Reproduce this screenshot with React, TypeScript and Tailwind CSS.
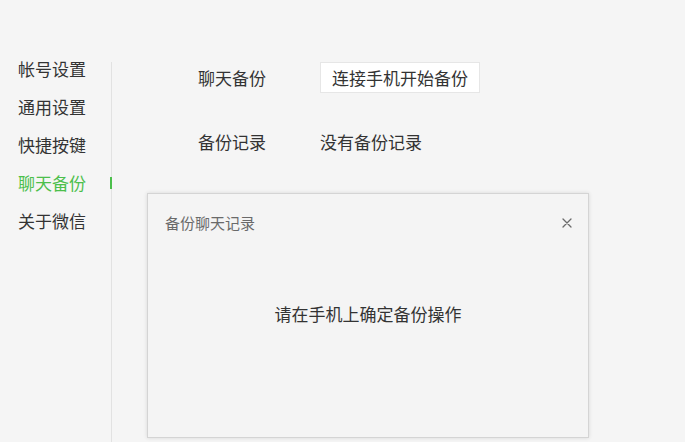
const FONT = '"Microsoft YaHei", "Noto Sans CJK SC", "Noto Sans", sans-serif';

const NAV = ['帐号设置', '通用设置', '快捷按键', '聊天备份', '关于微信'];

function CloseIcon() {
  return (
    <svg width="10" height="10" viewBox="0 0 10 10" aria-hidden="true">
      <path d="M1 1 L9 9 M9 1 L1 9" stroke="#6b6b6b" strokeWidth="1.3" strokeLinecap="round" />
    </svg>
  );
}

export default function App() {
  const active = '聊天备份';
  return (
    <div
      className="relative flex h-[442px] w-[685px] overflow-hidden bg-[#f5f5f5] text-[#333333]"
      style={{ fontFamily: FONT }}
    >
      {/* Sidebar */}
      <nav className="flex w-[111px] shrink-0 flex-col pt-[50px]">
        {NAV.map((item) => (
          <div key={item} className="relative flex h-[38px] items-center pl-[18px] text-[17px]">
            <span className={item === active ? 'text-[#4cbf4c]' : ''}>{item}</span>
            {item === active && (
              <span className="absolute right-[-1px] top-[13px] h-[12px] w-[2px] bg-[#4cbf4c]" />
            )}
          </div>
        ))}
      </nav>
      <div className="mt-[62px] w-px shrink-0 self-stretch bg-[#e2e2e2]" />

      {/* Content */}
      <main className="flex flex-col pl-[86px] pt-[62px] text-[17px]">
        <div className="flex h-[31px] items-center">
          <span className="w-[122px]">聊天备份</span>
          <button
            type="button"
            className="h-[31px] border border-[#e6e6e6] bg-white px-[11px] text-[17px] text-[#333333]"
          >
            连接手机开始备份
          </button>
        </div>
        <div className="mt-[33px] flex h-[31px] items-center">
          <span className="w-[122px]">备份记录</span>
          <span>没有备份记录</span>
        </div>
      </main>

      {/* Dialog */}
      <div className="absolute left-[147px] top-[193px] flex h-[245px] w-[442px] flex-col border border-[#d4d4d4] bg-[#f4f4f4] shadow-[0_0_4px_rgba(0,0,0,0.12)]">
        <div className="flex items-center justify-between pl-[17px] pr-[14px] pt-[18px]">
          <span className="text-[15px] text-[#6a6a6a]">备份聊天记录</span>
          <button type="button" className="flex h-[14px] w-[14px] items-center justify-center">
            <CloseIcon />
          </button>
        </div>
        <div className="flex flex-1 justify-center pt-[66px] text-[17px] text-[#333333]">
          请在手机上确定备份操作
        </div>
      </div>
    </div>
  );
}
